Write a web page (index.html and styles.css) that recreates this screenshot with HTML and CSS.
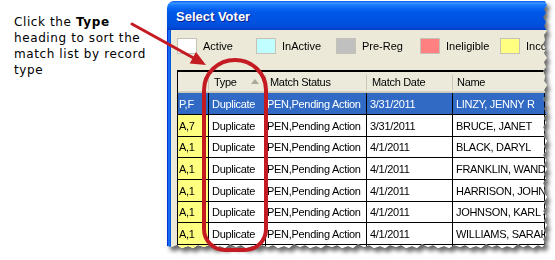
FILE: index.html
```html
<!DOCTYPE html>
<html>
<head>
<meta charset="utf-8">
<title>Select Voter</title>
<link rel="stylesheet" href="styles.css">
</head>
<body>
<div class="page">
  <p class="note">Click the <b>Type</b> heading to sort the match list by record type</p>
  <div class="window-wrap">
    <div class="window">
      <div class="titlebar">Select Voter</div>
      <div class="frame">
        <div class="legend">
          <div class="legend-item"><span class="swatch sw-active"></span>Active</div>
          <div class="legend-item"><span class="swatch sw-inactive"></span>InActive</div>
          <div class="legend-item"><span class="swatch sw-prereg"></span>Pre-Reg</div>
          <div class="legend-item"><span class="swatch sw-inel"></span>Ineligible</div>
          <div class="legend-item legend-cut"><span class="swatch sw-inco"></span>Inco</div>
        </div>
        <div class="grid">
          <div class="row head">
            <div class="c c1"></div>
            <div class="c c2">Type<span class="sort"></span></div>
            <div class="c c3">Match Status</div>
            <div class="c c4">Match Date</div>
            <div class="c c5">Name</div>
          </div>
          <div class="row sel">
            <div class="c c1">P,F</div>
            <div class="c c2">Duplicate</div>
            <div class="c c3">PEN,Pending Action</div>
            <div class="c c4">3/31/2011</div>
            <div class="c c5">LINZY, JENNY R</div>
          </div>
          <div class="row">
            <div class="c c1">A,7</div>
            <div class="c c2">Duplicate</div>
            <div class="c c3">PEN,Pending Action</div>
            <div class="c c4">3/31/2011</div>
            <div class="c c5">BRUCE, JANET</div>
          </div>
          <div class="row">
            <div class="c c1">A,1</div>
            <div class="c c2">Duplicate</div>
            <div class="c c3">PEN,Pending Action</div>
            <div class="c c4">4/1/2011</div>
            <div class="c c5">BLACK, DARYL</div>
          </div>
          <div class="row">
            <div class="c c1">A,1</div>
            <div class="c c2">Duplicate</div>
            <div class="c c3">PEN,Pending Action</div>
            <div class="c c4">4/1/2011</div>
            <div class="c c5">FRANKLIN, WANDA</div>
          </div>
          <div class="row">
            <div class="c c1">A,1</div>
            <div class="c c2">Duplicate</div>
            <div class="c c3">PEN,Pending Action</div>
            <div class="c c4">4/1/2011</div>
            <div class="c c5">HARRISON, JOHN J</div>
          </div>
          <div class="row">
            <div class="c c1">A,1</div>
            <div class="c c2">Duplicate</div>
            <div class="c c3">PEN,Pending Action</div>
            <div class="c c4">4/1/2011</div>
            <div class="c c5">JOHNSON, KARL J</div>
          </div>
          <div class="row">
            <div class="c c1">A,1</div>
            <div class="c c2">Duplicate</div>
            <div class="c c3">PEN,Pending Action</div>
            <div class="c c4">4/1/2011</div>
            <div class="c c5">WILLIAMS, SARAH</div>
          </div>
          <div class="row">
            <div class="c c1">A,1</div>
            <div class="c c2"></div>
            <div class="c c3"></div>
            <div class="c c4"></div>
            <div class="c c5"></div>
          </div>
        </div>
      </div>
    </div>
  </div>
  <svg class="marks" width="555" height="260" viewBox="0 0 555 260">
    <line x1="132" y1="24" x2="194" y2="58.3" stroke="#C41A22" stroke-width="3" stroke-linecap="round"/>
    <polygon points="206,65 189.7,63.4 196,52" fill="#C41A22"/>
    <path d="M204,90 A31,30 0 0 1 266,90 L266,229 A21,21 0 0 1 245,250 L225,250 A21,21 0 0 1 204,229 Z" fill="none" stroke="#C41A22" stroke-width="4"/>
  </svg>
</div>
</body>
</html>
```

FILE: styles.css
```css
html, body {
  margin: 0;
  padding: 0;
}

body {
  width: 555px;
  height: 260px;
  overflow: hidden;
  background: #fff;
  font-family: "Liberation Sans", Arial, sans-serif;
}

.page {
  position: relative;
  display: flex;
  align-items: flex-start;
  width: 555px;
  height: 260px;
}

.note {
  margin: 0;
  box-sizing: border-box;
  flex: none;
  width: 167px;
  padding: 14px 5px 0 14px;
  font-family: "DejaVu Sans", Verdana, sans-serif;
  font-size: 12px;
  line-height: 16px;
  letter-spacing: 0.6px;
  color: #000;
}

.window-wrap {
  flex: none;
  width: 386px;
  margin-top: 1px;
  filter: drop-shadow(3px 4px 2px rgba(0, 0, 0, 0.6));
}

.window {
  display: flex;
  flex-direction: column;
  height: 250px;
  overflow: hidden;
  clip-path: polygon(0 0, 378px 0, 380px 4px, 377px 8px, 379px 12px, 376px 16px, 379px 21px, 377px 25px, 380px 30px, 377px 34px, 378px 39px, 376px 43px, 379px 48px, 377px 52px, 380px 57px, 377px 61px, 379px 66px, 376px 70px, 378px 75px, 377px 80px, 380px 84px, 377px 89px, 379px 94px, 376px 98px, 379px 103px, 377px 108px, 380px 112px, 377px 117px, 379px 122px, 376px 126px, 378px 131px, 377px 136px, 380px 140px, 377px 145px, 379px 150px, 376px 154px, 379px 159px, 377px 164px, 380px 168px, 377px 173px, 379px 178px, 376px 182px, 378px 187px, 377px 192px, 380px 196px, 377px 201px, 379px 206px, 376px 210px, 379px 215px, 377px 220px, 380px 224px, 377px 229px, 379px 234px, 376px 238px, 378px 243px, 375px 246px, 371px 244px, 366px 247px, 361px 244px, 356px 246px, 351px 243px, 346px 247px, 340px 245px, 335px 247px, 330px 244px, 325px 246px, 319px 243px, 314px 247px, 309px 245px, 303px 247px, 298px 244px, 293px 246px, 287px 244px, 282px 247px, 277px 245px, 271px 247px, 266px 244px, 261px 246px, 255px 243px, 250px 247px, 245px 245px, 239px 247px, 234px 244px, 229px 246px, 223px 244px, 218px 247px, 213px 245px, 207px 247px, 202px 244px, 197px 246px, 191px 243px, 186px 247px, 181px 245px, 175px 247px, 170px 244px, 165px 246px, 159px 244px, 154px 247px, 149px 245px, 143px 247px, 138px 244px, 133px 246px, 127px 243px, 122px 247px, 117px 245px, 111px 247px, 106px 244px, 101px 246px, 95px 244px, 90px 247px, 85px 245px, 79px 247px, 74px 244px, 69px 246px, 63px 243px, 58px 247px, 53px 245px, 47px 247px, 42px 244px, 37px 246px, 31px 244px, 26px 247px, 21px 245px, 15px 247px, 10px 244px, 5px 246px, 0 245px);
}

.titlebar {
  flex: none;
  box-sizing: border-box;
  height: 29px;
  padding: 8px 0 0 9px;
  border-radius: 7px 0 0 0;
  background: linear-gradient(to bottom, #0058EE 0, #3D95FF 2px, #1B7BFF 4px, #0563F2 8px, #0056E6 12px, #0054E3 18px, #0050DC 24px, #0046D4 27px, #003CC6 29px);
  color: #fff;
  font-weight: bold;
  font-size: 13px;
  line-height: 15px;
  text-shadow: 1px 1px 0 #0A1F8F;
}

.frame {
  flex: 1;
  padding: 8px 0 0 10px;
  background: linear-gradient(to right, #0831D9 0, #0831D9 1px, #166AEE 1px, #166AEE 3px, #0855DD 3px, #0855DD 4px, #ECE9D8 4px);
}

.legend {
  display: grid;
  grid-template-columns: 79px 80px 84px 80px 46px;
  height: 16px;
  font-size: 11px;
  color: #000;
}

.legend-item {
  display: flex;
  align-items: center;
  gap: 6px;
  white-space: nowrap;
  overflow: hidden;
}

.swatch {
  flex: none;
  box-sizing: border-box;
  width: 20px;
  height: 16px;
  border: 1px solid #C6C3B6;
}

.sw-active { background: #FFFFFF; }
.sw-inactive { background: #C0FFFF; }
.sw-prereg { background: #C0C0C0; }
.sw-inel { background: #FF8080; }
.sw-inco { background: #FFFF80; }

.grid {
  margin-top: 16px;
  border-top: 2px solid #000;
  border-left: 1px solid #000;
  font-size: 11px;
  letter-spacing: -0.3px;
  color: #000;
}

.row {
  display: flex;
  box-sizing: border-box;
  height: 22px;
  background: #fff;
  border-bottom: 1px solid #000;
}

.row:nth-child(3n+4) {
  height: 21px;
}

.c {
  box-sizing: border-box;
  flex: none;
  display: flex;
  align-items: center;
  padding-left: 3px;
  border-right: 1px solid #000;
  white-space: nowrap;
  overflow: hidden;
}

.c1 { width: 31px; padding-left: 1px; background: #FFFF80; }
.c2 { width: 57px; }
.c3 { width: 101px; padding-left: 1px; }
.c4 { width: 86px; }
.c5 { width: 92px; }

.sel, .sel .c1 {
  background: #316AC5;
  color: #fff;
}

.head {
  height: 21px;
  border-bottom: 0;
  background: #EBEADB;
  box-shadow: inset 0 -1px 0 #CBC7B8, inset 0 -2px 0 #D6D2C2;
}

.head .c {
  border-right: 0;
  padding-bottom: 2px;
  background: linear-gradient(#CBC7B8, #CBC7B8) no-repeat right center / 1px 15px;
}

.head .c2 { padding-left: 5px; }
.head .c3 { padding-left: 4px; }
.head .c4 { padding-left: 5px; }
.head .c5 { padding-left: 4px; background: none; }

.sort {
  margin-left: auto;
  margin-right: 7px;
  margin-bottom: 1px;
  width: 0;
  height: 0;
  border-left: 4.5px solid transparent;
  border-right: 4.5px solid transparent;
  border-bottom: 5px solid #ACA899;
}

.marks {
  position: absolute;
  left: 0;
  top: 0;
  pointer-events: none;
}
```
